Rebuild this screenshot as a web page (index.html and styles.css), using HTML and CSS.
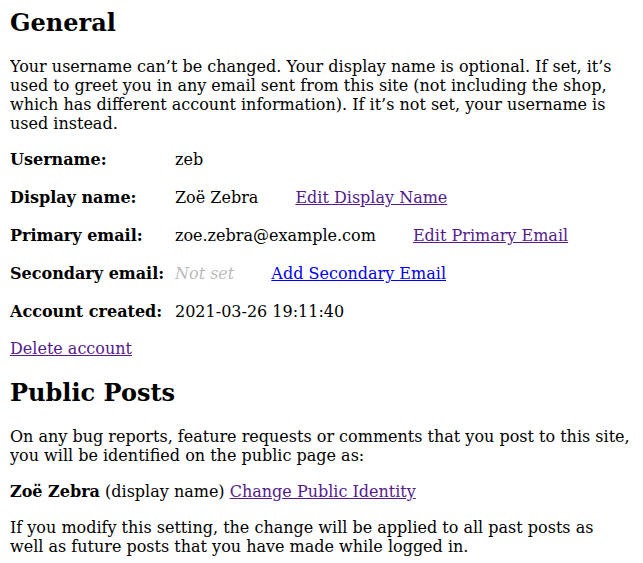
FILE: index.html
```html
<!DOCTYPE html>
<html lang="en">
<head>
    <meta charset="UTF-8">
    <meta name="viewport" content="width=device-width, initial-scale=1.0">
    <title>Account</title>
    <link rel="stylesheet" href="styles.css">
</head>
<body>
    <section class="general">
        <h2>General</h2>
        <p>Your username can’t be changed. Your display name is optional. If set, it’s used to greet you in any email sent from this site (not including the shop, which has different account information). If it’s not set, your username is used instead.</p>
        <div class="details">
            <div class="label">Username:</div>
            <div class="value">zeb</div>
            <div class="label">Display name:</div>
            <div class="value">Zoë Zebra <a href="#" class="visited">Edit Display Name</a></div>
            <div class="label">Primary email:</div>
            <div class="value">zoe.zebra@example.com <a href="#" class="visited">Edit Primary Email</a></div>
            <div class="label">Secondary email:</div>
            <div class="value"><span class="not-set">Not set</span> <a href="#">Add Secondary Email</a></div>
            <div class="label">Account created:</div>
            <div class="value">2021-03-26 19:11:40</div>
        </div>
        <p class="delete"><a href="#" class="visited">Delete account</a></p>
    </section>
    <section class="public">
        <h2>Public Posts</h2>
        <p>On any bug reports, feature requests or comments that you post to this site, you will be identified on the public page as:</p>
        <p><strong>Zoë Zebra</strong> (display name) <a href="#" class="visited">Change Public Identity</a></p>
        <p>If you modify this setting, the change will be applied to all past posts as well as future posts that you have made while logged in.</p>
    </section>
</body>
</html>
```
FILE: styles.css
```css
body {
    font-family: "DejaVu Serif", serif;
    font-size: 16px;
    line-height: 19px;
    color: #000;
    background: #fff;
    margin: 9px 12.5px 8px 10px;
}
h2 {
    font-size: 24px;
    line-height: 28px;
    margin: 0 0 20px;
}
.public h2 {
    margin-top: 21px;
}
p {
    margin: 17px 0;
}
a {
    color: #0000ee;
}
a.visited {
    color: #551a8b;
}
.details {
    display: grid;
    grid-template-columns: 165px auto;
    row-gap: 19px;
    margin: 17px 0;
}
.label {
    font-weight: bold;
}
.value a {
    margin-left: 32px;
}
.not-set {
    color: #bbb;
    font-style: italic;
}
.delete {
    margin-top: 18px;
}
```
